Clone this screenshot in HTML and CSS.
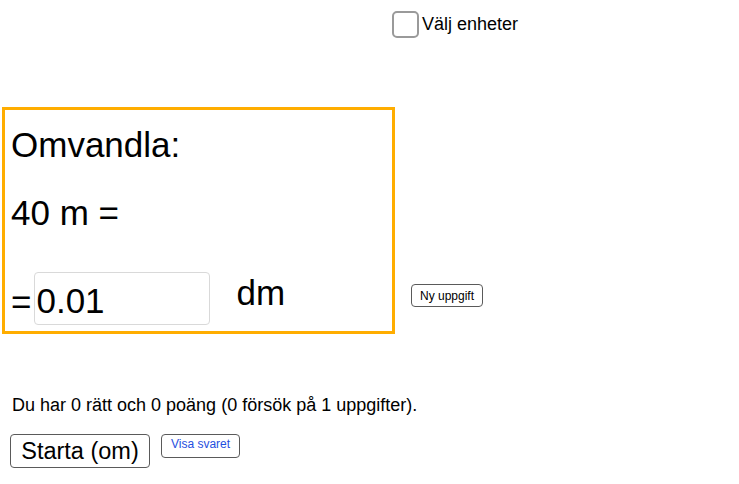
FILE: index.html
```html
<!DOCTYPE html>
<html lang="sv">
<head>
<meta charset="utf-8">
<title>Omvandla</title>
<link rel="stylesheet" href="styles.css">
</head>
<body>
<div class="app">
  <label class="toggle">
    <span class="check"></span>
    <span class="toggle-text">Välj enheter</span>
  </label>

  <div class="task-row">
    <div class="panel">
      <div class="title">Omvandla:</div>
      <div class="given">40 m =</div>
      <div class="answer-row">
        <span class="eq">=</span>
        <input class="answer" type="text" value="0.01">
        <span class="unit">dm</span>
      </div>
    </div>
    <button class="btn btn-small btn-new">Ny uppgift</button>
  </div>

  <p class="score">Du har 0 rätt och 0 poäng (0 försök på 1 uppgifter).</p>

  <div class="actions">
    <button class="btn btn-start">Starta (om)</button>
    <button class="btn btn-small btn-show">Visa svaret</button>
  </div>
</div>
</body>
</html>
```

FILE: styles.css
```css
html, body {
  margin: 0;
  padding: 0;
  background: #ffffff;
}

body {
  font-family: "Liberation Sans", Arial, sans-serif;
  color: #000000;
  width: 739px;
  height: 484px;
  overflow: hidden;
}

.app {
  display: flex;
  flex-direction: column;
  align-items: flex-start;
}

/* Checkbox row */
.toggle {
  display: flex;
  align-items: center;
  margin: 11px 0 0 392px;
  height: 27px;
}

.check {
  box-sizing: border-box;
  width: 27px;
  height: 27px;
  border: 2px solid #9a9a9a;
  border-radius: 5px;
  background: #ffffff;
}

.toggle-text {
  font-size: 18px;
  line-height: 20px;
  margin-left: 3px;
  margin-top: -1px;
}

/* Task row */
.task-row {
  display: flex;
  align-items: flex-start;
  margin: 69px 0 0 2px;
}

.panel {
  box-sizing: border-box;
  width: 393px;
  border: 3px solid #ffad00;
  padding: 15px 0 6px 6px;
  font-size: 35px;
}

.title,
.given {
  line-height: 40px;
}

.given {
  margin-top: 28px;
}

.answer-row {
  display: flex;
  align-items: flex-start;
  margin-top: 39px;
  height: 53px;
}

.eq {
  line-height: 40px;
  margin-top: 10px;
}

.answer {
  box-sizing: border-box;
  width: 176px;
  height: 53px;
  margin-left: 3px;
  padding: 8px 2px 3px 1px;
  border: 1px solid #d9d9d9;
  border-radius: 4px;
  font-family: "Liberation Sans", Arial, sans-serif;
  font-size: 35px;
  line-height: 40px;
  color: #000000;
  background: #ffffff;
  outline: none;
}

.unit {
  line-height: 40px;
  margin-left: 26px;
  margin-top: 1px;
}

/* Buttons */
.btn {
  box-sizing: border-box;
  font-family: "Liberation Sans", Arial, sans-serif;
  background: #ffffff;
  border: 1.5px solid #5a5a5a;
  border-radius: 4px;
  color: #000000;
  margin: 0;
  cursor: pointer;
}

.btn-small {
  font-size: 12px;
  line-height: 14px;
  padding: 0;
}

.btn-new {
  width: 72px;
  height: 23px;
  margin: 177px 0 0 16px;
}

.score {
  margin: 61px 0 0 12px;
  font-size: 18px;
  line-height: 20px;
}

.actions {
  display: flex;
  align-items: flex-start;
  margin: 19px 0 0 10px;
}

.btn-start {
  width: 140px;
  height: 34px;
  padding: 0;
  font-size: 23.5px;
  line-height: 27px;
}

.btn-show {
  width: 79px;
  height: 24px;
  margin-left: 11px;
  padding: 0 0 5px;
  color: #1f4fe0;
}
```
